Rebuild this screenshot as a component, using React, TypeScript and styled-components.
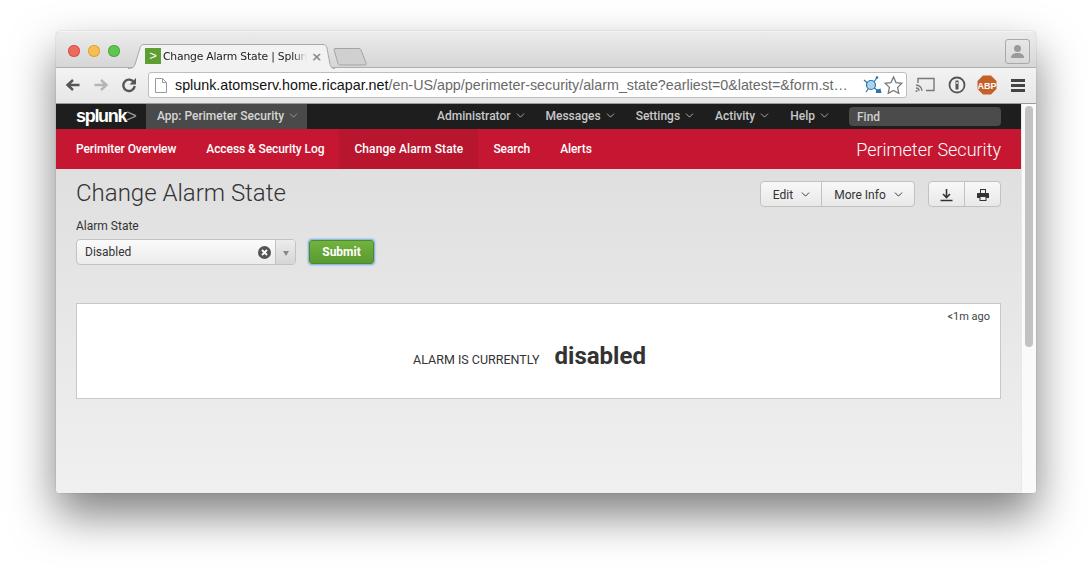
import styled, { createGlobalStyle } from "styled-components";
import { ChevronDown } from "lucide-react";

const GlobalStyle = createGlobalStyle`
  html, body {
    margin: 0;
    padding: 0;
    height: 573px;
    overflow: hidden;
    background: #fff;
  }
  body {
    padding: 31px 56px 0;
    box-sizing: border-box;
    font-family: Roboto, "Liberation Sans", sans-serif;
  }
`;

const Window = styled.div`
  width: 980px;
  height: 462px;
  border-radius: 5px 5px 3px 3px;
  overflow: hidden;
  display: flex;
  flex-direction: column;
`;

const Shadow = styled.div`
  width: 980px;
  height: 462px;
  border-radius: 5px;
  box-shadow: 0 22px 45px rgba(0, 0, 0, 0.5), 0 0 1px rgba(0, 0, 0, 0.5);
`;

const TabStrip = styled.div`
  height: 37px;
  flex: none;
  box-sizing: border-box;
  padding: 12px 6px 0 12px;
  display: flex;
  align-items: flex-start;
  background: linear-gradient(#ececec, #d6d6d6);
  border-top: 1px solid #f4f4f4;
  border-bottom: 1px solid #aeaeae;
  position: relative;
`;

const Dots = styled.div`
  display: flex;
  gap: 8px;
  margin-top: 1px;
  width: 60px;
  flex: none;
`;

const Dot = styled.span<{ $color: string; $edge: string }>`
  width: 12px;
  height: 12px;
  border-radius: 50%;
  background: ${({ $color }) => $color};
  box-shadow: inset 0 0 0 1px ${({ $edge }) => $edge};
`;

const Tab = styled.div`
  position: relative;
  width: 207px;
  height: 25px;
  flex: none;
  display: flex;
  align-items: center;
  padding: 0 0 1px 17px;
  box-sizing: border-box;
  z-index: 1;
`;

const TabShape = styled.svg`
  position: absolute;
  left: 0;
  top: 0;
`;

const Favicon = styled.span`
  position: relative;
  width: 16px;
  height: 16px;
  margin-right: 2px;
  background: #5f9e30;
  color: #fff;
  font: 13px/16px "Liberation Sans", sans-serif;
  text-align: center;
  flex: none;
`;

const TabTitle = styled.span`
  position: relative;
  white-space: nowrap;
  font: 10.8px "DejaVu Sans", sans-serif;
  letter-spacing: -0.2px;
  color: #222;
  -webkit-mask-image: linear-gradient(90deg, #000 90%, transparent);
  mask-image: linear-gradient(90deg, #000 90%, transparent);
`;

const TabClose = styled.span`
  position: relative;
  margin-left: 4px;
  color: #8a8a8a;
  font: 700 13px "DejaVu Sans", sans-serif;
`;

const NewTab = styled.svg`
  margin-left: -2px;
  margin-top: 4px;
  flex: none;
`;

const Profile = styled.div`
  margin-left: auto;
  margin-top: -5px;
  width: 25px;
  height: 25px;
  box-sizing: border-box;
  border: 1px solid #a9a9a9;
  border-radius: 3px;
  display: flex;
  align-items: center;
  justify-content: center;
`;

const Toolbar = styled.div`
  height: 36px;
  flex: none;
  box-sizing: border-box;
  display: flex;
  align-items: center;
  padding: 0 11px 1px 9px;
  background: linear-gradient(#f3f3f3, #e6e6e6);
  border-bottom: 1px solid #9a9a9a;
`;

const NavIcon = styled.svg`
  flex: none;
  margin-right: 12px;
  &:last-of-type {
    margin-right: 11px;
  }
`;

const Omnibox = styled.div`
  width: 759px;
  height: 26px;
  flex: none;
  box-sizing: border-box;
  display: flex;
  align-items: center;
  background: #fff;
  border: 1px solid #bdbdbd;
  border-radius: 3px;
  padding: 0 2px 0 6px;
`;

const Url = styled.span`
  flex: 1;
  min-width: 0;
  margin-left: 8px;
  white-space: nowrap;
  font: 14.3px "Liberation Sans", sans-serif;
  color: #111;
`;

const UrlPath = styled.span`
  color: #6a6a6a;
`;

const ExtIcon = styled.svg<{ $gap?: number }>`
  flex: none;
  margin-left: ${({ $gap }) => $gap ?? 0}px;
`;

const Extensions = styled.div`
  display: flex;
  align-items: center;
  gap: 11px;
  margin-left: 8px;
`;

const Page = styled.div`
  flex: 1;
  min-height: 0;
  display: flex;
`;

const PageMain = styled.div`
  flex: 1;
  min-width: 0;
  display: flex;
  flex-direction: column;
  background: linear-gradient(#dcdcdc, #f0f0f0);
`;

const ScrollTrack = styled.div`
  width: 15px;
  flex: none;
  box-sizing: border-box;
  background: #fafafa;
  border-left: 1px solid #e8e8e8;
  padding: 2px 3px 0 3px;
`;

const ScrollThumb = styled.div`
  height: 241px;
  border-radius: 4px;
  background: #c2c2c2;
`;

const SplunkBar = styled.div`
  height: 25px;
  flex: none;
  display: flex;
  align-items: stretch;
  background: #1e1e1e;
  padding-left: 20px;
  color: #c8c8c8;
  font-size: 12px;
`;

const Logo = styled.div`
  width: 70px;
  color: #fff;
  font: 700 18px/24px "Liberation Sans", sans-serif;
  letter-spacing: -1.3px;
  flex: none;
`;

const LogoMark = styled.span`
  color: #999;
  font-weight: 400;
`;

const AppMenu = styled.div`
  width: 161px;
  flex: none;
  box-sizing: border-box;
  padding: 0 0 2px 11px;
  display: flex;
  align-items: center;
  gap: 3px;
  background: #4a4a4a;
  color: #d6d6d6;
  font-weight: 500;
`;

const BarMenu = styled.div`
  margin-left: auto;
  display: flex;
  align-items: center;
  gap: 19px;
  margin-right: 20px;
  font-weight: 500;
`;

const BarItem = styled.span`
  display: flex;
  align-items: center;
  gap: 3px;
  padding-bottom: 2px;
`;

const FindBox = styled.div`
  width: 152px;
  height: 19px;
  margin-left: -1px;
  box-sizing: border-box;
  padding-left: 8px;
  background: #4b4b4b;
  border-radius: 4px;
  color: #cfcfcf;
  font-size: 12px;
  font-weight: 500;
  line-height: 20px;
`;

const AppNav = styled.div`
  height: 40px;
  flex: none;
  display: flex;
  align-items: stretch;
  background: #c61732;
  padding: 0 20px 0 5px;
  color: #fff;
  font-size: 12px;
  font-weight: 500;
  letter-spacing: -0.08px;
`;

const NavLink = styled.div<{ $active?: boolean }>`
  display: flex;
  align-items: center;
  padding: 0 15px;
  background: ${({ $active }) => ($active ? "#b8162e" : "transparent")};
  letter-spacing: ${({ $active }) => ($active ? "0.1px" : "inherit")};
`;

const AppTitle = styled.div`
  margin-left: auto;
  align-self: center;
  font-size: 18px;
  font-weight: 300;
  letter-spacing: 0;
`;

const Content = styled.div`
  padding: 0 20px;
`;

const TitleRow = styled.div`
  display: flex;
  justify-content: space-between;
  align-items: flex-start;
  padding-top: 12px;
`;

const Title = styled.h1`
  margin: 0;
  font-size: 24px;
  font-weight: 300;
  line-height: 24px;
  color: #333;
`;

const Actions = styled.div`
  display: flex;
  gap: 13px;
`;

const ButtonGroup = styled.div`
  display: flex;
  height: 26px;
  box-sizing: border-box;
  border: 1px solid #c2c2c2;
  border-radius: 4px;
  background: linear-gradient(#f8f8f8, #e8e8e8);
  color: #333;
  font-size: 12px;
`;

const GroupButton = styled.div<{ $width: number; $icon?: boolean }>`
  width: ${({ $width }) => $width}px;
  display: flex;
  align-items: center;
  justify-content: center;
  gap: 6px;
  padding: 1px 0 0 ${({ $icon }) => ($icon ? 0 : 3)}px;
  box-sizing: border-box;
  & + & {
    border-left: 1px solid #c2c2c2;
  }
`;

const FieldLabel = styled.div`
  margin-top: 12px;
  font-size: 12px;
  line-height: 14px;
  color: #333;
`;

const FormRow = styled.div`
  display: flex;
  align-items: center;
  gap: 13px;
  margin-top: 6px;
`;

const Select = styled.div`
  width: 220px;
  height: 26px;
  box-sizing: border-box;
  display: flex;
  align-items: center;
  border: 1px solid #c2c2c2;
  border-radius: 4px;
  background: linear-gradient(#fbfbfb, #ebebeb);
  font-size: 12px;
  color: #333;
`;

const SelectValue = styled.span`
  flex: 1;
  padding-left: 8px;
`;

const SelectArrow = styled.span`
  width: 19px;
  align-self: stretch;
  margin-left: 4px;
  display: flex;
  align-items: center;
  justify-content: center;
  border-left: 1px solid #c2c2c2;
  border-radius: 0 3px 3px 0;
  background: linear-gradient(#ececec, #d6d6d6);
  &::after {
    content: "";
    margin-top: 3px;
    border: 3.5px solid transparent;
    border-top: 5px solid #888;
    border-bottom: 0;
  }
`;

const Submit = styled.div`
  width: 65px;
  height: 24px;
  box-sizing: border-box;
  display: flex;
  align-items: center;
  justify-content: center;
  border: 1px solid #4f8a2a;
  border-radius: 3px;
  background: linear-gradient(#72b23f, #5a9a30);
  box-shadow: 0 0 2px 1px #6aa8e8;
  color: #fff;
  font-size: 12px;
  font-weight: 700;
`;

const Panel = styled.div`
  position: relative;
  margin-top: 38px;
  height: 96px;
  box-sizing: border-box;
  background: #fff;
  border: 1px solid #c8c8c8;
  display: flex;
  align-items: center;
  justify-content: center;
  gap: 15px;
  padding: 9px 18px 0 0;
`;

const PanelTime = styled.span`
  position: absolute;
  top: 6px;
  right: 10px;
  font-size: 11px;
  color: #444;
`;

const SingleLabel = styled.span`
  font-size: 12.5px;
  color: #333;
  text-transform: uppercase;
  margin-top: 7px;
`;

const SingleValue = styled.span`
  font-size: 24px;
  font-weight: 700;
  color: #333;
`;

const menuItems = ["Administrator", "Messages", "Settings", "Activity", "Help"];
const navItems = [
  "Perimiter Overview",
  "Access & Security Log",
  "Change Alarm State",
  "Search",
  "Alerts",
];

export default function App() {
  return (
    <>
      <GlobalStyle />
      <Shadow>
        <Window>
          <TabStrip>
            <Dots>
              <Dot $color="#ec6a5e" $edge="#d5574c" />
              <Dot $color="#f4bf4f" $edge="#d9a63c" />
              <Dot $color="#61c554" $edge="#52a944" />
            </Dots>
            <Tab>
              <TabShape width="207" height="25" viewBox="0 0 207 25">
                <path
                  d="M0 24.5c4 0 6-1 7-4L12 4c.6-2.500 2-3.500 4-3.500h179c2 0 3.400 1 4 3.500l3 16.500c1 3 2 4 5 4"
                  fill="#f2f2f2"
                  stroke="#a8a8a8"
                />
              </TabShape>
              <Favicon>&gt;</Favicon>
              <TabTitle>Change Alarm State | Splun</TabTitle>
              <TabClose>×</TabClose>
            </Tab>
            <NewTab width="34" height="18" viewBox="0 0 34 18">
              <path
                d="M1 1.500c0-.6.400-1 1-1h24c1 0 1.500.5 2 1.500l5 13c.4 1 0 2-1 2H7c-1 0-1.600-.5-2-1.500Z"
                fill="#d0d0d0"
                stroke="#a3a3a3"
              />
            </NewTab>
            <Profile>
              <svg width="15" height="15" viewBox="0 0 15 15">
                <circle cx="7.500" cy="4.500" r="3.500" fill="#9a9a9a" />
                <path d="M1 14c0-3.500 2.500-5 6.500-5s6.500 1.500 6.500 5Z" fill="#9a9a9a" />
              </svg>
            </Profile>
          </TabStrip>
          <Toolbar>
            <NavIcon width="16" height="16" viewBox="0 0 16 16">
              <path d="M14.500 8H3M8 3 2.500 8 8 13" fill="none" stroke="#555" strokeWidth="2.400" />
            </NavIcon>
            <NavIcon width="16" height="16" viewBox="0 0 16 16">
              <path d="M1.500 8H13M8 3l5.500 5L8 13" fill="none" stroke="#b5b5b5" strokeWidth="2.400" />
            </NavIcon>
            <NavIcon width="16" height="16" viewBox="0 0 16 16">
              <path d="M13 5.500A5.700 5.700 0 1 0 13.700 9" fill="none" stroke="#555" strokeWidth="2.400" />
              <path d="M15 1v6.500H8.500Z" fill="#555" />
            </NavIcon>
            <Omnibox>
              <svg width="12" height="15" viewBox="0 0 12 15">
                <path d="M.5.500h7l4 4v10H.5Z M7.500.500v4h4" fill="#fff" stroke="#9a9a9a" />
              </svg>
              <Url>
                splunk.atomserv.home.ricapar.net
                <UrlPath>/en-US/app/perimeter-security/alarm_state?earliest=0&amp;latest=&amp;form.st…</UrlPath>
              </Url>
              <ExtIcon width="20" height="20" viewBox="0 0 20 20" $gap={-1}>
                <circle cx="9" cy="10" r="4.500" fill="#a8d4ee" stroke="#2f74a8" strokeWidth="1.200" />
                <path d="M2 5l3.500 3M15 2.500l-3 4.500M4 17l2.500-3.500M12 13l5 3" stroke="#2f74a8" strokeWidth="1.200" />
                <circle cx="15" cy="2.500" r="1.300" fill="#2f74a8" />
                <path d="M14 15l4.500-1.500 1 4.500h-5.500Z" fill="#2f74a8" />
              </ExtIcon>
              <ExtIcon width="21" height="21" viewBox="0 0 20 20" $gap={1}>
                <path
                  d="m10 2 2.400 5.200 5.600.7-4.100 3.900 1.100 5.700-5-2.800-5 2.800 1.100-5.700L2 7.900l5.600-.7Z"
                  fill="#fff"
                  stroke="#777"
                  strokeWidth="1.200"
                />
              </ExtIcon>
            </Omnibox>
            <Extensions>
              <ExtIcon width="20" height="16" viewBox="0 0 20 16">
                <path d="M3 6V1.500h16v12h-8" fill="none" stroke="#777" strokeWidth="1.400" />
                <path d="M1 8a6 6 0 0 1 6 6M1 11a3 3 0 0 1 3 3" fill="none" stroke="#777" strokeWidth="1.300" />
                <circle cx="1.500" cy="14" r="1" fill="#777" />
              </ExtIcon>
              <ExtIcon width="18" height="18" viewBox="0 0 18 18" $gap={2}>
                <circle cx="9" cy="9" r="7.500" fill="#f0f0f0" stroke="#555" strokeWidth="1.800" />
                <path d="M7.500 4.500h3v9h-3Z" fill="#555" />
                <circle cx="9" cy="7" r="0.900" fill="#f0f0f0" />
              </ExtIcon>
              <ExtIcon width="20" height="20" viewBox="0 0 20 20">
                <path d="M6 .5h8L19.500 6v8L14 19.500H6L.5 14V6Z" fill="#c4602a" />
                <text x="10" y="13.500" textAnchor="middle" fontFamily="Liberation Sans" fontWeight="700" fontSize="9" fill="#fff">
                  ABP
                </text>
              </ExtIcon>
              <ExtIcon width="14" height="13" viewBox="0 0 14 13" $gap={3}>
                <path d="M0 0h14v3H0ZM0 5h14v3H0ZM0 10h14v3H0Z" fill="#444" />
              </ExtIcon>
            </Extensions>
          </Toolbar>
          <Page>
            <PageMain>
              <SplunkBar>
                <Logo>
                  splunk<LogoMark>&gt;</LogoMark>
                </Logo>
                <AppMenu>
                  App: Perimeter Security
                  <ChevronDown size={13} strokeWidth={1.5} color="#aaa" />
                </AppMenu>
                <BarMenu>
                  {menuItems.map((item) => (
                    <BarItem key={item}>
                      {item}
                      <ChevronDown size={13} strokeWidth={1.5} />
                    </BarItem>
                  ))}
                  <FindBox>Find</FindBox>
                </BarMenu>
              </SplunkBar>
              <AppNav>
                {navItems.map((item) => (
                  <NavLink key={item} $active={item === "Change Alarm State"}>
                    {item}
                  </NavLink>
                ))}
                <AppTitle>Perimeter Security</AppTitle>
              </AppNav>
              <Content>
                <TitleRow>
                  <Title>Change Alarm State</Title>
                  <Actions>
                    <ButtonGroup>
                      <GroupButton $width={60}>
                        Edit <ChevronDown size={13} strokeWidth={1.8} />
                      </GroupButton>
                      <GroupButton $width={93}>
                        More Info <ChevronDown size={13} strokeWidth={1.8} />
                      </GroupButton>
                    </ButtonGroup>
                    <ButtonGroup>
                      <GroupButton $width={35} $icon>
                        <svg width="13" height="14" viewBox="0 0 13 14">
                          <path d="M6.500 1v8M3 6l3.500 3.500L10 6" fill="none" stroke="#333" strokeWidth="1.600" />
                          <path d="M.5 12.500h12" stroke="#333" strokeWidth="1.500" />
                        </svg>
                      </GroupButton>
                      <GroupButton $width={36} $icon>
                        <svg width="12" height="12" viewBox="0 0 12 12">
                          <path
                            d="M3 0h6v4h2c.6 0 1 .4 1 1v4H9.500v3h-7V9H0V5c0-.6.400-1 1-1h2Z"
                            fill="#333"
                          />
                          <path d="M4 1h4v3H4ZM3.500 8h5v3h-5Z" fill="#f0f0f0" />
                        </svg>
                      </GroupButton>
                    </ButtonGroup>
                  </Actions>
                </TitleRow>
                <FieldLabel>Alarm State</FieldLabel>
                <FormRow>
                  <Select>
                    <SelectValue>Disabled</SelectValue>
                    <svg width="13" height="13" viewBox="0 0 13 13">
                      <circle cx="6.500" cy="6.500" r="6.500" fill="#555" />
                      <path d="M4 4l5 5M9 4l-5 5" stroke="#fff" strokeWidth="1.800" />
                    </svg>
                    <SelectArrow />
                  </Select>
                  <Submit>Submit</Submit>
                </FormRow>
                <Panel>
                  <PanelTime>&lt;1m ago</PanelTime>
                  <SingleLabel>Alarm is currently</SingleLabel>
                  <SingleValue>disabled</SingleValue>
                </Panel>
              </Content>
            </PageMain>
            <ScrollTrack>
              <ScrollThumb />
            </ScrollTrack>
          </Page>
        </Window>
      </Shadow>
    </>
  );
}
